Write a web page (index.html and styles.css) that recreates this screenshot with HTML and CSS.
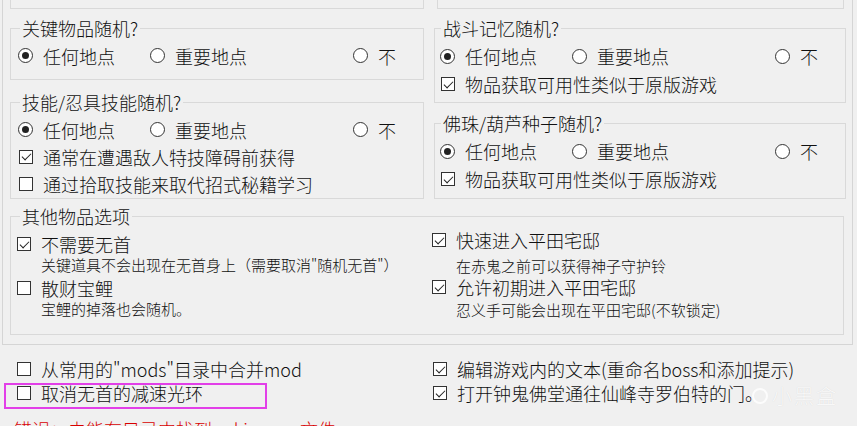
FILE: index.html
```html
<!DOCTYPE html>
<html lang="zh-CN">
<head>
  <meta charset="UTF-8">
  <meta name="viewport" content="width=device-width, initial-scale=1.0">
  <title>随机化设置</title>
  <link rel="stylesheet" href="styles.css">
</head>
<body>
  <div class="panel">
    <!-- 左列 -->
    <div class="col col-left">
      <div class="stub"></div>

      <fieldset class="group g1">
        <legend>关键物品随机?</legend>
        <div class="body">
          <div class="radios">
            <label class="opt"><span class="radio on"></span>任何地点</label>
            <label class="opt"><span class="radio"></span>重要地点</label>
            <label class="opt"><span class="radio"></span>不</label>
          </div>
        </div>
      </fieldset>

      <fieldset class="group g2">
        <legend>技能/忍具技能随机?</legend>
        <div class="body">
          <div class="radios">
            <label class="opt"><span class="radio on"></span>任何地点</label>
            <label class="opt"><span class="radio"></span>重要地点</label>
            <label class="opt"><span class="radio"></span>不</label>
          </div>
          <label class="opt"><span class="check on"></span>通常在遭遇敌人特技障碍前获得</label>
          <label class="opt"><span class="check"></span>通过拾取技能来取代招式秘籍学习</label>
        </div>
      </fieldset>
    </div>

    <!-- 右列 -->
    <div class="col col-right">
      <div class="stub"></div>

      <fieldset class="group g3">
        <legend>战斗记忆随机?</legend>
        <div class="body">
          <div class="radios">
            <label class="opt"><span class="radio on"></span>任何地点</label>
            <label class="opt"><span class="radio"></span>重要地点</label>
            <label class="opt"><span class="radio"></span>不</label>
          </div>
          <label class="opt"><span class="check on"></span>物品获取可用性类似于原版游戏</label>
        </div>
      </fieldset>

      <fieldset class="group g4">
        <legend>佛珠/葫芦种子随机?</legend>
        <div class="body">
          <div class="radios">
            <label class="opt"><span class="radio on"></span>任何地点</label>
            <label class="opt"><span class="radio"></span>重要地点</label>
            <label class="opt"><span class="radio"></span>不</label>
          </div>
          <label class="opt"><span class="check on"></span>物品获取可用性类似于原版游戏</label>
        </div>
      </fieldset>
    </div>

    <!-- 其他物品选项 -->
    <fieldset class="group other">
      <legend>其他物品选项</legend>
      <div class="body">
        <div class="sub sub-left">
          <label class="opt title"><span class="check on"></span>不需要无首</label>
          <p class="desc">关键道具不会出现在无首身上（需要取消"随机无首"）</p>
          <label class="opt title second"><span class="check"></span>散财宝鲤</label>
          <p class="desc">宝鲤的掉落也会随机。</p>
        </div>
        <div class="sub sub-right">
          <label class="opt title"><span class="check on"></span>快速进入平田宅邸</label>
          <p class="desc first">在赤鬼之前可以获得神子守护铃</p>
          <label class="opt title"><span class="check on"></span>允许初期进入平田宅邸</label>
          <p class="desc last">忍义手可能会出现在平田宅邸(不软锁定)</p>
        </div>
      </div>
    </fieldset>
  </div>

  <div class="extras">
    <label class="opt"><span class="check"></span>从常用的"mods"目录中合并mod</label>
    <label class="opt"><span class="check on"></span>编辑游戏内的文本(重命名boss和添加提示)</label>
    <label class="opt marked"><span class="check"></span>取消无首的减速光环</label>
    <label class="opt"><span class="check on"></span>打开钟鬼佛堂通往仙峰寺罗伯特的门。</label>
  </div>

  <p class="error">错误：未能在目录中找到 sekiro.exe 文件</p>

  <div class="watermark"><span class="wm-logo"></span>小黑盒</div>
</body>
</html>
```

FILE: styles.css
```css
body {
  margin: 0;
  background: #f0f0f0;
  color: #111;
  font-family: "Noto Sans CJK SC", "Noto Sans", sans-serif;
  font-size: 18px;
  font-weight: 300;
  overflow: hidden;
  position: relative;
  height: 426px;
}

.panel {
  margin-left: 2px;
  width: 851px;
  box-sizing: border-box;
  border: 1px solid #d5d5d5;
  border-top: none;
  padding: 0 6px 9px 7px;
  display: grid;
  grid-template-columns: 414px 1fr;
  column-gap: 10px;
}

.stub {
  height: 9px;
  box-sizing: border-box;
  border: 1px solid #d9d9d9;
  border-top: none;
}

.col-right .stub {
  margin: 0 2px 0 3px;
}

/* グループボックス */
.group {
  margin: 0;
  padding: 0;
  border: 1px solid #d9d9d9;
  min-width: 0;
}

.group legend {
  padding: 0 2px;
  margin-left: 9px;
  font-size: 18px;
  line-height: 22px;
}

.col-right .group legend {
  margin-left: 6px;
}

.g1 { margin-top: 8px; }
.g1 .body { padding: 3px 0 10px 7px; }

.g2 { margin-top: 11px; }
.g2 .body { padding: 3px 0 1px 7px; }

.g3 { margin-top: 8px; }
.g3 .body { padding: 3px 0 4px 5px; }

.g4 { margin-top: 9px; }
.g4 .body { padding: 3px 0 5px 5px; }

.col-right .opt {
  height: 28px;
}

.radios {
  display: grid;
  grid-template-columns: 132px 203px auto;
}

.opt {
  display: flex;
  align-items: center;
  height: 27px;
  line-height: 22px;
  white-space: nowrap;
}

.radio {
  width: 15px;
  height: 15px;
  box-sizing: border-box;
  border: 1px solid #333;
  border-radius: 50%;
  background: #fff;
  margin-right: 10px;
  position: relative;
  flex: none;
}

.radio.on::after {
  content: '';
  position: absolute;
  left: 3px;
  top: 3px;
  width: 7px;
  height: 7px;
  border-radius: 50%;
  background: #222;
}

.check {
  width: 14px;
  height: 14px;
  box-sizing: border-box;
  border: 1px solid #333;
  background: #fff;
  margin: 0 10px 0 1px;
  position: relative;
  flex: none;
}

.check.on::after {
  content: '';
  position: absolute;
  left: 3.5px;
  top: 0.5px;
  width: 4px;
  height: 8px;
  border: solid #222;
  border-width: 0 1.3px 1.3px 0;
  transform: rotate(45deg);
}

/* 其他物品选项 */
.other {
  grid-column: 1 / -1;
  margin: 6px 2px 0 0;
}

.other .body {
  display: grid;
  grid-template-columns: 415px 1fr;
  padding: 0 0 14px 5px;
}

.sub-left { padding-top: 6px; }
.sub-right { padding-top: 2px; }

.other .title {
  height: 22px;
}

.sub-left .second { margin-top: 2px; }

.desc {
  margin: 0;
  padding-left: 25px;
  font-size: 15px;
  line-height: 20px;
  white-space: nowrap;
}

.sub-right .first { margin-top: 5px; }
.sub-right .last { margin-top: 2px; }

/* 下部のオプション */
.extras {
  display: grid;
  grid-template-columns: 416px 1fr;
  padding: 12px 0 0 16px;
}

.extras .opt {
  height: 24px;
}

.marked {
  position: relative;
}

.marked::before {
  content: '';
  position: absolute;
  left: -12px;
  top: 2px;
  width: 263px;
  height: 26px;
  box-sizing: border-box;
  border: 2px solid #e23fe8;
}

.error {
  margin: 12px 0 0 14px;
  color: #d80000;
  font-size: 18px;
  line-height: 24px;
  white-space: nowrap;
}

.watermark {
  position: absolute;
  left: 752px;
  top: 381px;
  display: flex;
  align-items: center;
  gap: 4px;
  color: rgba(255, 255, 255, 0.85);
  font-size: 20px;
  letter-spacing: 2px;
  text-shadow: 0 0 1px rgba(0, 0, 0, 0.12);
}

.wm-logo {
  width: 12px;
  height: 12px;
  border: 2px solid rgba(255, 255, 255, 0.8);
  border-radius: 50%;
}
```
